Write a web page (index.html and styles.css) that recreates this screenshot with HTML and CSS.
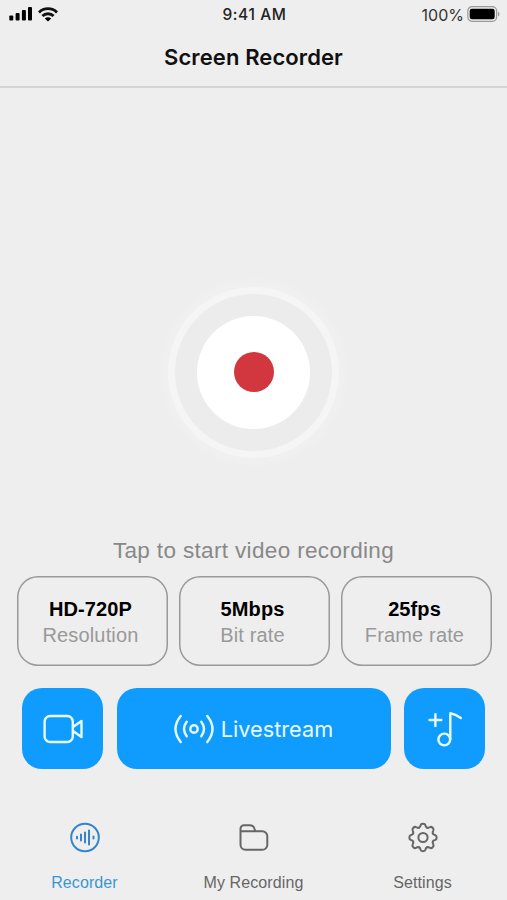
FILE: index.html
```html
<!DOCTYPE html>
<html lang="en">
<head>
<meta charset="utf-8">
<title>Screen Recorder</title>
<link rel="stylesheet" href="styles.css">
</head>
<body>
<div class="app">
  <header class="status">
    <div class="status-left">
      <svg class="signal" width="24" height="14" viewBox="0 0 24 14"><rect x="0.3" y="8.6" width="4" height="5" rx="1"/><rect x="6.6" y="6" width="4" height="7.600" rx="1"/><rect x="12.900" y="3" width="4" height="10.600" rx="1"/><rect x="19" y="0" width="4" height="13.600" rx="1"/></svg>
      <svg class="wifi" width="20" height="15" viewBox="0 0 20 15"><g fill="none" stroke="#111" stroke-width="2.800"><path d="M1 5.400a12.700 12.700 0 0 1 18 0"/><path d="M4.400 9.100a7.900 7.900 0 0 1 11.200 0"/></g><path d="M10 14.600l-3.200-3.100a4.600 4.600 0 0 1 6.400 0z"/></svg>
    </div>
    <span class="time">9:41 AM</span>
    <div class="status-right">
      <span class="percent">100%</span>
      <svg width="33" height="16" viewBox="0 0 33 16"><rect x="0.800" y="0.700" width="28.800" height="14.600" rx="4.300" fill="none" stroke="#999" stroke-width="1.200"/><rect x="2.700" y="2.700" width="25" height="10.600" rx="2.200"/><path d="M31 5.500q1.500 1 1.500 2.500t-1.500 2.500z" fill="#999"/></svg>
    </div>
  </header>
  <div class="nav"><h1>Screen Recorder</h1></div>
  <main>
    <section class="stage">
      <button class="record" aria-label="Start"><span class="ring"><span class="disc"><span class="dot"></span></span></span></button>
    </section>
    <p class="hint"><span>Tap to start video recording</span></p>
    <section class="stats">
      <div class="stat"><strong>HD-720P</strong><span>Resolution</span></div>
      <div class="stat"><strong>5Mbps</strong><span>Bit rate</span></div>
      <div class="stat"><strong>25fps</strong><span>Frame rate</span></div>
    </section>
    <section class="actions">
      <button class="action" aria-label="Camera"><svg width="40" height="30" viewBox="0 0 40 30"><rect x="1.600" y="2" width="28.200" height="26" rx="5.500"/><path d="M30 13l8.500-6v16l-8.500-6"/></svg></button>
      <button class="action"><svg width="40" height="30" viewBox="0 0 40 30"><circle cx="20" cy="15" r="3.700"/><path d="M12.700 7.800Q7.300 15 12.700 22.200M27.300 7.800Q32.700 15 27.300 22.200M6.700 2Q-3.700 15 6.700 28M33.300 2Q43.700 15 33.300 28"/></svg><span class="live">Livestream</span></button>
      <button class="action" aria-label="Add music"><svg width="36" height="36" viewBox="0 0 36 36"><path d="M2.500 9h11.800M8.400 3.100v11.800M23.300 28V2.200Q28.500 3 33.800 7"/><circle cx="17.300" cy="28.500" r="5.900"/></svg></button>
    </section>
  </main>
  <footer class="tabs">
    <a class="tab active"><svg width="32" height="32" viewBox="0 0 32 32"><circle cx="16" cy="15.500" r="13.800"/><path d="M8 14.800v1.600M12 12.500v6M16 10.500v10M20 8.500v14M24.500 14.500v2"/></svg><span>Recorder</span></a>
    <a class="tab"><svg width="32" height="32" viewBox="0 0 32 32"><path d="M2.500 9.300h21.800a5 5 0 0 1 5 5v8.500a5 5 0 0 1-5 5H7.500a5 5 0 0 1-5-5V6.700a3.500 3.500 0 0 1 3.500-3.500h5.800q3.700 0 4.700 3.600l.8 2.500"/></svg><span>My Recording</span></a>
    <a class="tab"><svg width="32" height="32" viewBox="-16 -15.500 32 32"><defs><path id="tooth" d="M-4.100-9.800C-3-10.250-2.700-10.800-2.500-12C-2.200-13.400-1.300-13.700 0-13.700C1.300-13.700 2.200-13.400 2.500-12C2.700-10.800 3-10.250 4.100-9.800"/></defs><use href="#tooth"/><use href="#tooth" transform="rotate(45)"/><use href="#tooth" transform="rotate(90)"/><use href="#tooth" transform="rotate(135)"/><use href="#tooth" transform="rotate(180)"/><use href="#tooth" transform="rotate(225)"/><use href="#tooth" transform="rotate(270)"/><use href="#tooth" transform="rotate(315)"/><circle r="4.600"/></svg><span>Settings</span></a>
  </footer>
</div>
</body>
</html>
```

FILE: styles.css
```css
* { box-sizing: border-box; }
body { margin: 0; background: #eee; font-family: "Liberation Sans", Arial, sans-serif; color: #111; }
.app { width: 507px; height: 900px; display: flex; flex-direction: column; overflow: hidden; }
button { border: 0; padding: 0; background: none; font: inherit; color: inherit; }
svg { display: block; flex: none; }
span, strong { white-space: nowrap; }

.status { height: 30px; flex: none; display: grid; grid-template-columns: 1fr auto 1fr; align-items: center; padding: 0 7px 2px 9px; font-family: Inter, sans-serif; }
.status-left { display: flex; gap: 5px; align-items: center; }
.status-right { display: flex; gap: 3px; align-items: center; justify-content: flex-end; }
.time { font-size: 15.5px; font-weight: 500; line-height: 20px; letter-spacing: 0.600px; color: #222; padding-top: 2px; }
.percent { font-size: 16px; line-height: 20px; color: #333; padding-top: 1px; }
.nav { height: 58px; flex: none; border-bottom: 2px solid #d5d5d5; display: flex; justify-content: center; padding-top: 13px; }
h1 { margin: 0; font: 600 22px/28px Inter, sans-serif; letter-spacing: 0.100px; }

main { height: 682px; flex: none; display: flex; flex-direction: column; }
.stage { height: 449px; display: flex; justify-content: center; padding-top: 188px; }
.record { width: 192px; height: 192px; border-radius: 50%; display: grid; place-items: center; background: radial-gradient(circle closest-side, #f0f0f0 92%, #efefef 96%, #eee 100%); }
.ring { width: 171px; height: 171px; border-radius: 50%; border: 7px solid #f5f5f5; background: #ececec; display: grid; place-items: center; }
.disc { width: 113px; height: 113px; border-radius: 50%; background: #fff; display: grid; place-items: center; }
.dot { width: 40px; height: 40px; border-radius: 50%; background: #d2363f; }
.hint { margin: 0; height: 39px; display: flex; justify-content: center; font-size: 22.5px; line-height: 28px; letter-spacing: 0.350px; color: #888; }
.stats { display: grid; grid-template-columns: repeat(3, 151px); gap: 11px; padding-left: 16.500px; }
.stat { height: 90px; box-shadow: inset 0 0 0 1.500px #999; border-radius: 21px; display: flex; flex-direction: column; align-items: center; padding-top: 20px; padding-right: 3px; }
.stat strong { font-size: 20px; line-height: 26px; color: #000; letter-spacing: 0.100px; }
.stat span { font-size: 20px; line-height: 26px; color: #999; letter-spacing: 0.150px; }
.actions { display: grid; grid-template-columns: 81px 274px 81px; gap: 13.500px; padding: 22px 0 0 22px; }
.action { height: 81px; border-radius: 20px; background: #109cff; color: #e6fbff; display: flex; align-items: center; justify-content: center; gap: 7px; font: 21.7px/28px Inter, sans-serif; }
.action svg { fill: none; stroke: #e6fbff; stroke-width: 2.400; stroke-linecap: round; stroke-linejoin: round; }
.live { padding-top: 1px; }

.tabs { display: grid; grid-template-columns: repeat(3, 169px); flex: 1; padding-top: 52px; }
.tab { display: flex; flex-direction: column; align-items: center; font-size: 16px; line-height: 20px; letter-spacing: 0.100px; gap: 19px; color: #666; }
.tab svg { fill: none; stroke: #666; stroke-width: 2; stroke-linecap: round; stroke-linejoin: round; }
.tab.active { color: #3a96d3; }
.tab.active svg { stroke: #3583cc; }
```
